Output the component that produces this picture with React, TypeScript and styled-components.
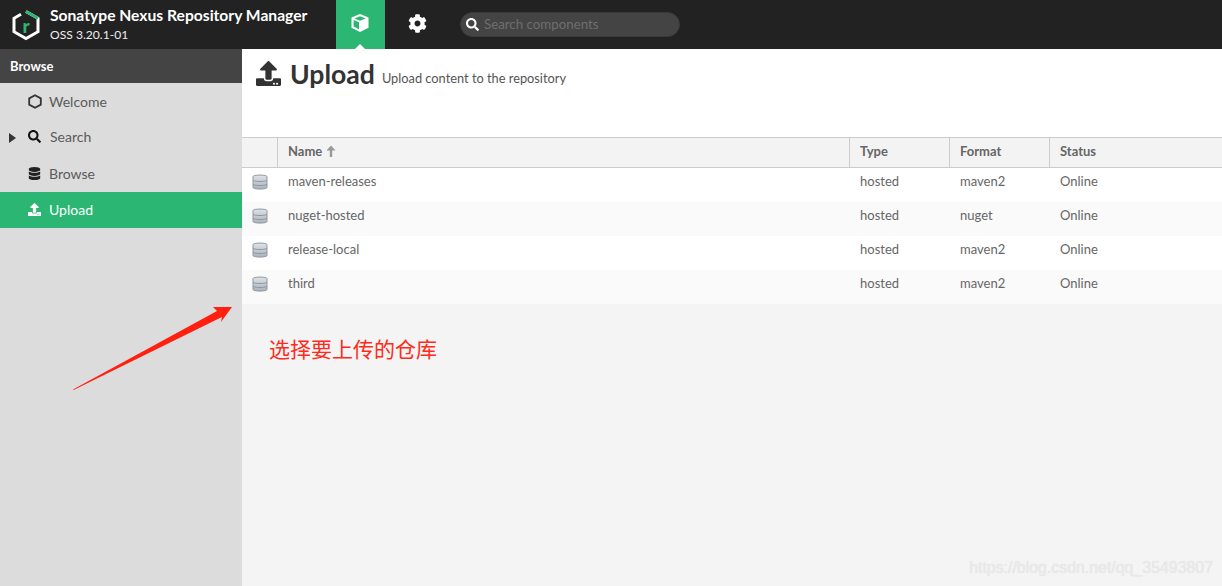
import React from 'react'
import styled, { createGlobalStyle } from 'styled-components'
import { FaCog, FaDatabase, FaSearch, FaUpload } from 'react-icons/fa'

const repos = [
  { name: 'maven-releases', format: 'maven2' },
  { name: 'nuget-hosted', format: 'nuget' },
  { name: 'release-local', format: 'maven2' },
  { name: 'third', format: 'maven2' },
]

const App = () => {
  return (
    <Page>
      <GlobalStyle />
      <TopBar>
        <Brand>
          <LogoWrap>
            <svg width="30" height="32" viewBox="0 0 30 32">
              <path d="M15 2.5 L27 9.3 V22.7 L15 29.5 L3 22.7 V9.3 L10 5.3" fill="none" stroke="#fff" strokeWidth="3" />
              <path d="M15 2.5 L27 9.3" fill="none" stroke="#2bb673" strokeWidth="3" />
            </svg>
            <LogoLetter>r</LogoLetter>
          </LogoWrap>
          <BrandText>
            <BrandTitle>Sonatype Nexus Repository Manager</BrandTitle>
            <BrandVersion>OSS 3.20.1-01</BrandVersion>
          </BrandText>
        </Brand>
        <BrowseTab>
          <svg width="20" height="20" viewBox="0 0 20 20">
            <path d="M10 1 L18.5 4.6 V14.8 L10 19 L1.5 14.8 V4.6 Z" fill="#fff" />
            <path d="M3.6 7 L9 9.3 V16.2 L3.6 13.5 Z" fill="#2bb673" />
            <path d="M10 3.2 L15.6 5.4 L10 7.7 L4.4 5.4 Z" fill="#2bb673" />
          </svg>
        </BrowseTab>
        <GearTab>
          <FaCog size={19} />
        </GearTab>
        <SearchBox>
          <FaSearch size={13} />
          <SearchInput placeholder="Search components" />
        </SearchBox>
      </TopBar>
      <Body>
        <Sidebar>
          <SideHeader>Browse</SideHeader>
          <SideList>
            <SideItem>
              <SideIcon>
                <svg width="14" height="15" viewBox="0 0 14 15">
                  <path d="M7 1.2 L12.8 4.4 V10.6 L7 13.8 L1.2 10.6 V4.4 Z" fill="none" stroke="#333" strokeWidth="1.8" />
                </svg>
              </SideIcon>
              Welcome
            </SideItem>
            <SideItem>
              <Caret />
              <SideIcon>
                <FaSearch size={13} color="#111" />
              </SideIcon>
              Search
            </SideItem>
            <SideItem>
              <SideIcon>
                <FaDatabase size={13} color="#222" />
              </SideIcon>
              Browse
            </SideItem>
            <SideItem $active>
              <SideIcon>
                <FaUpload size={13} color="#fff" />
              </SideIcon>
              Upload
            </SideItem>
          </SideList>
        </Sidebar>
        <Main>
          <TitleArea>
            <FaUpload size={25} color="#333" />
            <Title>Upload</Title>
            <Subtitle>Upload content to the repository</Subtitle>
          </TitleArea>
          <Table>
            <HeadRow>
              <HeadCell />
              <HeadCell>
                Name
                <svg width="10" height="12" viewBox="0 0 10 12">
                  <path d="M5 0.5 L9.5 5.5 H6.2 V12 H3.8 V5.5 H0.5 Z" fill="#999" />
                </svg>
              </HeadCell>
              <HeadCell>Type</HeadCell>
              <HeadCell>Format</HeadCell>
              <HeadCell>Status</HeadCell>
            </HeadRow>
            {repos.map((repo, i) => (
              <Row key={repo.name} $odd={i % 2 === 1}>
                <IconCell>
                  <svg width="16" height="18" viewBox="0 0 16 18">
                    <defs>
                      <linearGradient id={`db${i}`} x1="0" y1="0" x2="0" y2="1">
                        <stop offset="0" stopColor="#dfe3e8" />
                        <stop offset="1" stopColor="#aab2bb" />
                      </linearGradient>
                    </defs>
                    <path
                      d="M1 3.5 C1 1.6 15 1.6 15 3.5 V14.5 C15 16.6 1 16.6 1 14.5 Z"
                      fill={`url(#db${i})`}
                      stroke="#8f979f"
                    />
                    <path d="M1 7 C1 9 15 9 15 7 M1 11 C1 13 15 13 15 11" fill="none" stroke="#8f979f" />
                  </svg>
                </IconCell>
                <Cell>{repo.name}</Cell>
                <Cell>hosted</Cell>
                <Cell>{repo.format}</Cell>
                <Cell>Online</Cell>
              </Row>
            ))}
          </Table>
          <Note>选择要上传的仓库</Note>
        </Main>
      </Body>
      <ArrowMark width="170" height="95" viewBox="0 0 170 95">
        <path d="M2 89.5 L146 11 L142 7 L161 7 L150 22 L151 17 L2.6 90 Z" fill="#ff2010" />
      </ArrowMark>
      <Watermark>https://blog.csdn.net/qq_35493807</Watermark>
    </Page>
  )
}

export default App

const GlobalStyle = createGlobalStyle`
  html, body {
    margin: 0;
    padding: 0;
  }
  body {
    font-family: Lato, "Open Sans", sans-serif;
  }
  input::placeholder {
    color: #6e6e6e;
  }
`

const Page = styled.div`
  position: relative;
  width: 1222px;
  height: 586px;
  overflow: hidden;
  display: flex;
  flex-direction: column;
`

const TopBar = styled.header`
  height: 49px;
  flex: none;
  display: flex;
  align-items: center;
  background: #222;
`

const Brand = styled.div`
  width: 336px;
  display: flex;
  align-items: center;
  gap: 9px;
  padding-left: 11px;
  box-sizing: border-box;
`

const LogoWrap = styled.div`
  position: relative;
  width: 30px;
  height: 32px;
`

const LogoLetter = styled.span`
  position: absolute;
  left: 11.5px;
  top: 5px;
  font-size: 19px;
  font-weight: 900;
  color: #2bb673;
`

const BrandText = styled.div`
  display: flex;
  flex-direction: column;
  gap: 3px;
  color: #fff;
  padding-bottom: 1px;
`

const BrandTitle = styled.div`
  font-size: 15.65px;
  line-height: 19px;
  font-weight: 700;
  white-space: nowrap;
`

const BrandVersion = styled.div`
  font-size: 12.1px;
  line-height: 14px;
  color: #eee;
`

const BrowseTab = styled.div`
  position: relative;
  width: 49px;
  height: 49px;
  box-sizing: border-box;
  padding: 0 2px 3px 0;
  background: #2bb673;
  display: flex;
  align-items: center;
  justify-content: center;
  &::after {
    content: '';
    position: absolute;
    left: 19px;
    bottom: 0;
    border-left: 5px solid transparent;
    border-right: 5px solid transparent;
    border-bottom: 5px solid #fff;
  }
`

const GearTab = styled.div`
  width: 65px;
  height: 49px;
  box-sizing: border-box;
  padding-bottom: 3px;
  display: flex;
  align-items: center;
  justify-content: center;
  color: #fff;
  margin-right: 10px;
`

const SearchBox = styled.div`
  width: 220px;
  height: 25px;
  box-sizing: border-box;
  border-radius: 13px;
  background: #444;
  border: 1px solid #3a3a3a;
  display: flex;
  align-items: center;
  gap: 5px;
  padding-left: 5px;
  color: #fff;
`

const SearchInput = styled.input`
  flex: 1;
  min-width: 0;
  border: 0;
  outline: 0;
  padding: 0 0 2px;
  background: transparent;
  font-family: Lato, "Open Sans", sans-serif;
  font-size: 13.3px;
  color: #ccc;
`

const Body = styled.div`
  flex: 1;
  display: flex;
  min-height: 0;
`

const Sidebar = styled.aside`
  width: 242px;
  flex: none;
  background: #dcdcdc;
`

const SideHeader = styled.div`
  height: 34px;
  box-sizing: border-box;
  padding: 0 0 1px 10px;
  display: flex;
  align-items: center;
  background: #444;
  color: #fff;
  font-size: 13px;
  font-weight: 700;
`

const SideList = styled.nav`
  margin-top: 1px;
`

const SideItem = styled.div<{ $active?: boolean }>`
  position: relative;
  height: 36px;
  box-sizing: border-box;
  padding: 0 0 2px 27px;
  display: flex;
  align-items: center;
  gap: 7px;
  font-size: 14px;
  color: ${(p) => (p.$active ? '#fff' : '#5a5a5a')};
  background: ${(p) => (p.$active ? '#2bb673' : 'transparent')};
  &:nth-child(2) {
    height: 35px;
    gap: 8px;
  }
  &:nth-child(3) {
    height: 37px;
    padding-bottom: 0;
  }
`

const SideIcon = styled.span`
  width: 15px;
  display: flex;
  align-items: center;
  justify-content: center;
`

const Caret = styled.span`
  position: absolute;
  left: 9px;
  top: 13px;
  border-top: 5px solid transparent;
  border-bottom: 5px solid transparent;
  border-left: 7px solid #333;
`

const Main = styled.main`
  flex: 1;
  min-width: 0;
  background: #f4f4f4;
`

const TitleArea = styled.div`
  height: 88px;
  box-sizing: border-box;
  background: #fff;
  display: flex;
  align-items: flex-start;
  padding: 12px 0 0 14px;
  color: #333;
`

const Title = styled.h1`
  margin: -2px 0 0 9px;
  font-size: 26.6px;
  line-height: 30px;
  font-weight: 700;
`

const Subtitle = styled.span`
  margin: 9px 0 0 7px;
  font-size: 12.8px;
  color: #555;
`

const Table = styled.div`
  display: grid;
  grid-template-columns: 36px 572px 100px 100px 1fr;
`

const HeadRow = styled.div`
  display: contents;
`

const HeadCell = styled.div`
  height: 31px;
  box-sizing: border-box;
  display: flex;
  align-items: center;
  gap: 4px;
  padding: 0 0 3px 10px;
  background: #f3f3f3;
  border-top: 1px solid #ccc;
  border-bottom: 1px solid #ccc;
  border-right: 1px solid #ccc;
  font-size: 13px;
  font-weight: 700;
  color: #666;
  &:last-child {
    border-right: 0;
  }
`

const Row = styled.div<{ $odd: boolean }>`
  display: contents;
  & > div {
    background: ${(p) => (p.$odd ? '#fafafa' : '#fff')};
  }
`

const Cell = styled.div`
  height: 34px;
  box-sizing: border-box;
  padding: 5px 0 0 10px;
  font-size: 13px;
  line-height: 16px;
  color: #666;
`

const IconCell = styled.div`
  height: 34px;
  padding: 5px 0 0 10px;
  box-sizing: border-box;
`

const Note = styled.div`
  margin: 31px 0 0 27px;
  font-family: "Noto Sans CJK SC", sans-serif;
  font-size: 21px;
  line-height: 26px;
  color: #ff2a1a;
`

const ArrowMark = styled.svg`
  position: absolute;
  left: 71px;
  top: 300px;
`

const Watermark = styled.div`
  position: absolute;
  right: 9px;
  bottom: 9px;
  font-family: "Liberation Sans", sans-serif;
  font-size: 15.9px;
  color: #e9e9e9;
  text-shadow: 0 0 1px #dedede;
`
